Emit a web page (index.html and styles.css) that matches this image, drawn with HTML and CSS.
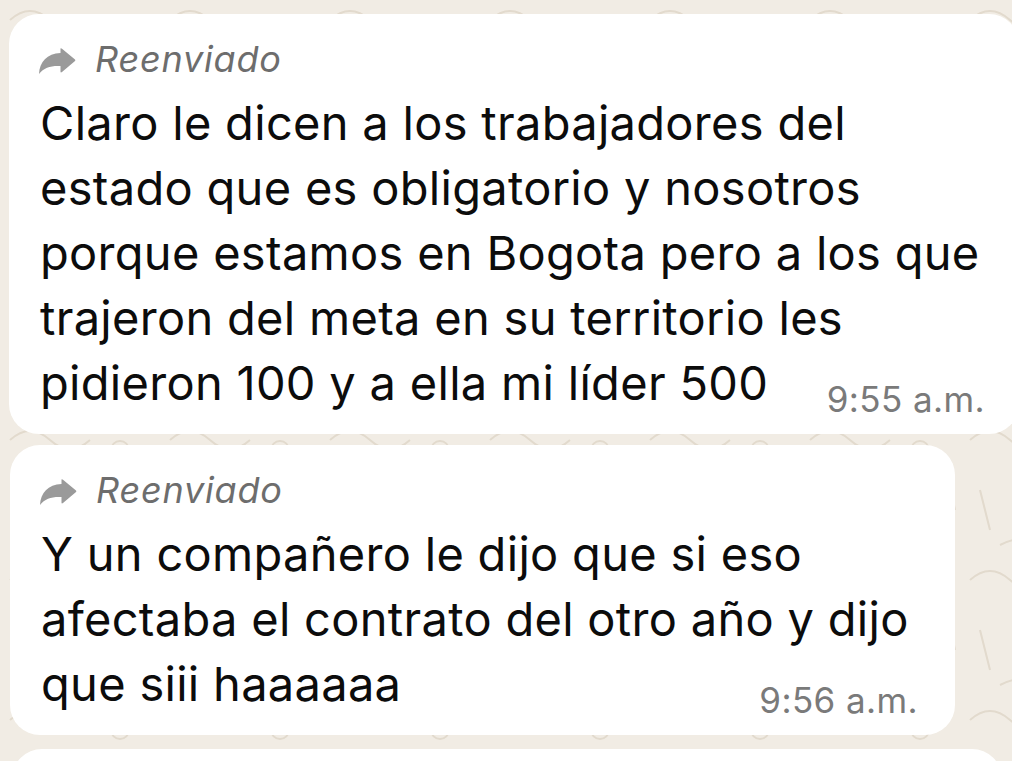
FILE: index.html
```html
<!DOCTYPE html>
<html lang="es">
<head>
  <meta charset="UTF-8">
  <title>Chat</title>
  <link rel="stylesheet" href="styles.css">
</head>
<body>
  <div class="chat">
    <div class="bubble bubble-wide">
      <div class="forwarded">
        <svg class="fwd-icon" viewBox="0 0 38 26" width="38" height="26">
          <path d="M22.5 0.5 Q23 0 24 0.8 L37 11.5 Q37.8 12.3 37 13.1 L24 24 Q22.5 25 22.5 23.5 V18 C13 17.5 6 19.5 1 26 C1.5 14 9 5.5 22.5 5 Z" fill="#9a9a9a"/>
        </svg>
        <span>Reenviado</span>
      </div>
      <p class="text">Claro le dicen a los trabajadores del<br>estado que es obligatorio y nosotros<br>porque estamos en Bogota pero a los que<br>trajeron del meta en su territorio les<br>pidieron 100 y a ella mi líder 500</p>
      <span class="time">9:55 a.m.</span>
    </div>

    <div class="bubble bubble-mid">
      <div class="forwarded">
        <svg class="fwd-icon" viewBox="0 0 38 26" width="38" height="26">
          <path d="M22.5 0.5 Q23 0 24 0.8 L37 11.5 Q37.8 12.3 37 13.1 L24 24 Q22.5 25 22.5 23.5 V18 C13 17.5 6 19.5 1 26 C1.5 14 9 5.5 22.5 5 Z" fill="#9a9a9a"/>
        </svg>
        <span>Reenviado</span>
      </div>
      <p class="text">Y un compañero le dijo que si eso<br>afectaba el contrato del otro año y dijo<br>que siii haaaaaa</p>
      <span class="time">9:56 a.m.</span>
    </div>

    <div class="bubble bubble-next"></div>
  </div>
</body>
</html>
```

FILE: styles.css
```css
body {
  margin: 0;
  height: 761px;
  overflow: hidden;
  font-family: Inter, "Liberation Sans", Arial, sans-serif;
  background-color: #f1ece4;
  background-image: url("data:image/svg+xml,%3Csvg xmlns='http://www.w3.org/2000/svg' width='160' height='140'%3E%3Cg fill='none' stroke='%23e2dacd' stroke-width='2'%3E%3Cpath d='M10 20 q20 -18 40 0 t40 0'/%3E%3Ccircle cx='120' cy='30' r='9'/%3E%3Cpath d='M20 70 l10 40'/%3E%3Cpath d='M60 60 q15 25 0 50'/%3E%3Ccircle cx='100' cy='95' r='6'/%3E%3Cpath d='M130 80 l20 -15 l5 25'/%3E%3Cpath d='M40 125 q30 -15 60 0'/%3E%3C/g%3E%3C/svg%3E");
}

.chat {
  display: flex;
  flex-direction: column;
  padding-top: 14px;
}

.bubble {
  position: relative;
  background: #ffffff;
  border-radius: 30px;
  padding: 25px 31px 19px 31px;
  box-sizing: border-box;
}

.bubble-wide {
  margin-left: 9px;
  width: 1010px;
  margin-bottom: 11px;
}

.bubble-mid {
  margin-left: 10px;
  width: 945px;
  margin-bottom: 14px;
}

.bubble-next {
  margin-left: 12px;
  width: 990px;
  height: 60px;
  flex-shrink: 0;
}

.forwarded {
  display: flex;
  align-items: center;
  gap: 19px;
  height: 40px;
  margin-left: -2px;
  margin-bottom: 11px;
  color: #6d6d6d;
  font-size: 36px;
  font-style: italic;
  letter-spacing: 0.8px;
}

.fwd-icon {
  flex-shrink: 0;
  margin-top: 3px;
}

.text {
  margin: 0;
  font-size: 47px;
  line-height: 65px;
  color: #0c0c0c;
  white-space: nowrap;
  letter-spacing: 0.3px;
}

.time {
  position: absolute;
  right: 34px;
  bottom: 17px;
  font-size: 35px;
  line-height: 36px;
  color: #7a7a7a;
  letter-spacing: 0.4px;
}

.bubble-mid .time {
  right: 37px;
}
```
